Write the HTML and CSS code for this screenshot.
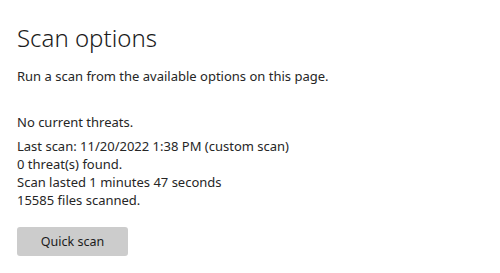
FILE: index.html
```html
<!DOCTYPE html>
<html lang="en">
<head>
  <meta charset="UTF-8" />
  <meta name="viewport" content="width=device-width, initial-scale=1" />
  <title>Scan options</title>
  <link rel="stylesheet" href="styles.css">
</head>
<body>
  <main class="page">
    <h1 class="title">Scan options</h1>
    <p class="intro">Run a scan from the available options on this page.</p>

    <div class="status">
      <p class="status-head">No current threats.</p>
      <p>Last scan: 11/20/2022 1:38 PM (custom scan)</p>
      <p>0 threat(s) found.</p>
      <p>Scan lasted 1 minutes 47 seconds</p>
      <p>15585 files scanned.</p>
    </div>

    <button class="btn-scan">Quick scan</button>
  </main>
</body>
</html>
```

FILE: styles.css
```css
body {
  margin: 0;
  background: #ffffff;
  font-family: "Noto Sans", "Open Sans", sans-serif;
  color: #1f1f1f;
}

.page {
  padding: 22px 17px 0 17px;
}

.title {
  margin: 0;
  font-size: 24px;
  font-weight: 300;
  line-height: 32px;
  color: #1b1b1b;
}

.intro {
  margin: 13px 0 0 0;
  font-size: 13px;
  line-height: 18px;
  color: #262626;
}

/* Estado del último análisis */
.status {
  margin-top: 28px;
  font-size: 13px;
  color: #262626;
}
.status p {
  margin: 0;
  line-height: 18px;
}
.status .status-head {
  margin-bottom: 6px;
}

.btn-scan {
  display: block;
  margin-top: 18px;
  width: 111px;
  height: 29px;
  border: none;
  border-radius: 3px;
  background: #cccccc;
  font-family: inherit;
  font-size: 12.5px;
  color: #1b1b1b;
  cursor: pointer;
}
.btn-scan:hover {
  background: #c2c2c2;
}
```
